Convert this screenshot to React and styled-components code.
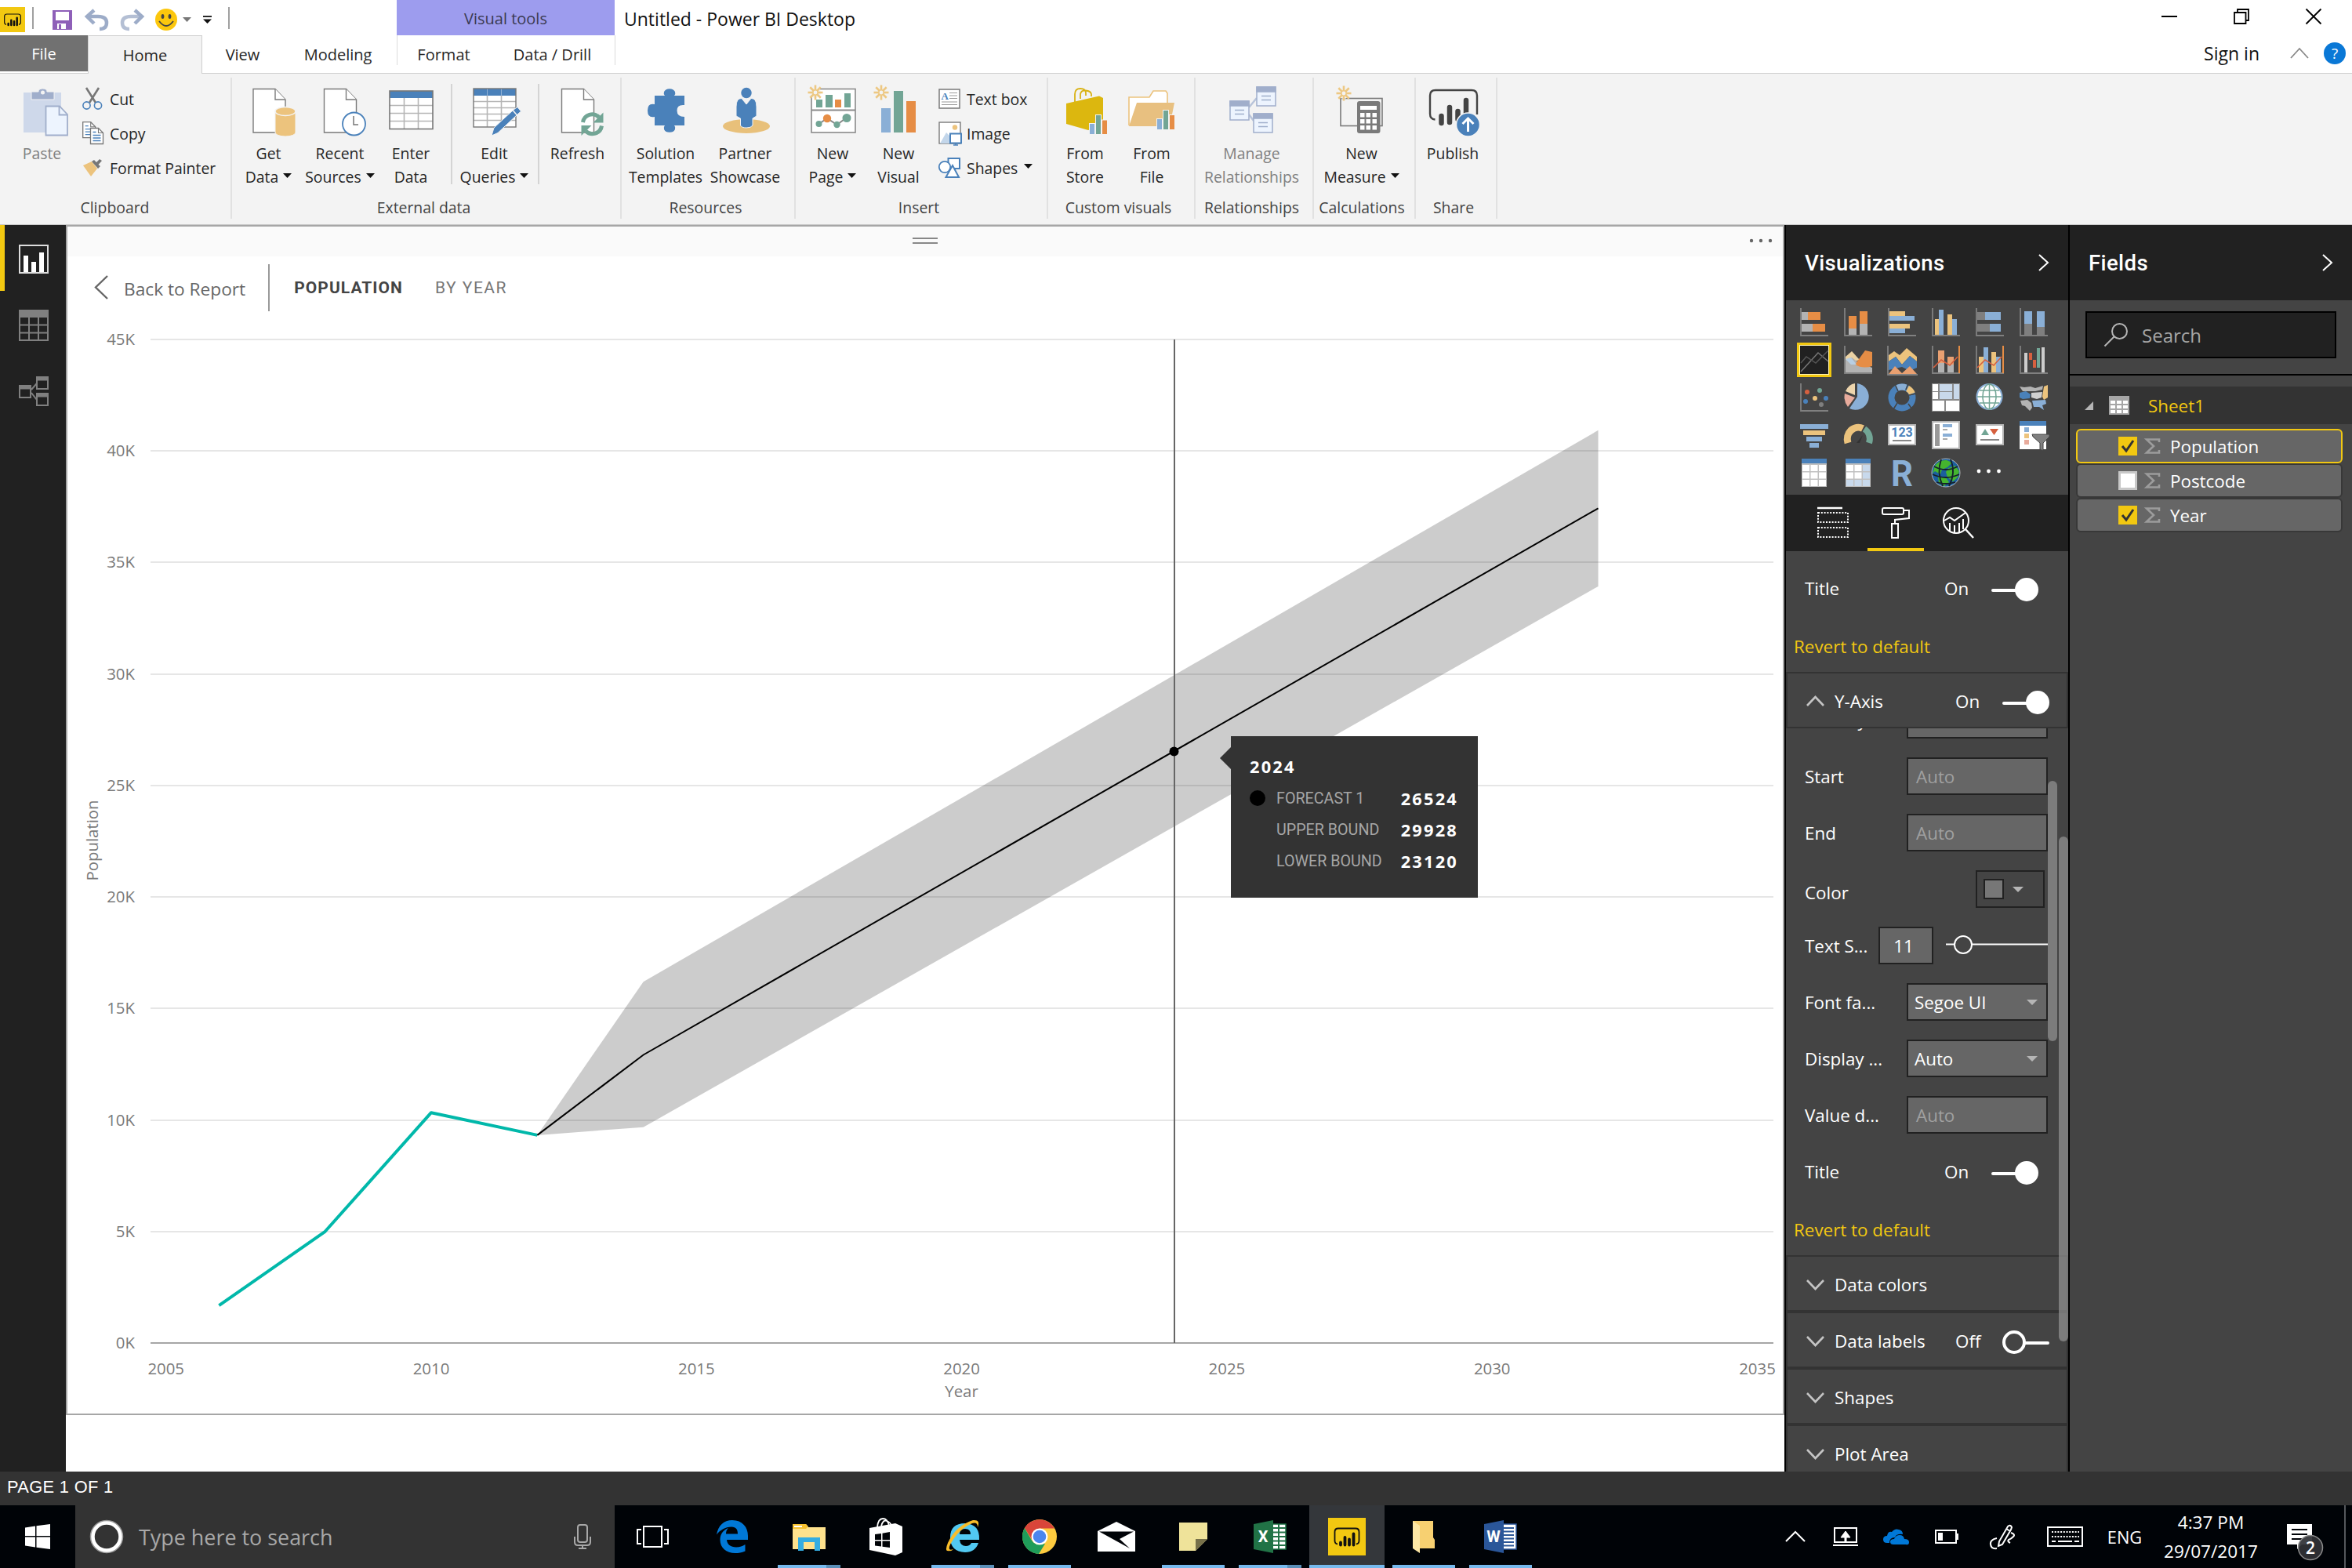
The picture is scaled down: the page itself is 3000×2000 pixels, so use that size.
import React from 'react';
import styled, { createGlobalStyle } from 'styled-components';

const ui = "'Open Sans', 'Noto Sans', sans-serif";
const din = "Roboto, 'Liberation Sans', sans-serif";
const yellow = '#f2c811';
const blue = '#4a81ba';
const sky = '#8aafd6';
const teal = '#72a595';
const orange = '#e68d45';
const gold = '#ecc37d';
const red = '#d6603f';

const Global = createGlobalStyle`
  html, body { margin: 0; padding: 0; background: #fff; }
  *, *::before, *::after { box-sizing: border-box; }
  svg { display: block; flex: none; overflow: visible; }
`;

const Screen = styled.div`
  width: 3000px;
  height: 2000px;
  display: flex;
  flex-direction: column;
  overflow: hidden;
  font-family: ${ui};
  color: #262626;
  white-space: nowrap;
`;

/* ---------- title bar ---------- */
const TitleBar = styled.header`
  height: 45px;
  display: flex;
  background: #fff;
`;
const QuickAccess = styled.div`
  width: 506px;
  display: flex;
  align-items: center;
  padding-top: 5px;
`;
const Spaced = styled.span`
  display: block;
  flex: none;
  margin-left: ${(p) => p.$ml || 0}px;
`;
const QuickRule = styled.i`
  width: 2px;
  height: 28px;
  margin: 0 0 4px ${(p) => p.$ml}px;
  background: #a0a0a0;
`;
const VisualTools = styled.div`
  width: 278px;
  display: flex;
  align-items: center;
  justify-content: center;
  background: #9d9cee;
  color: #3a3a52;
  font-size: 20px;
  padding-top: 1px;
`;
const WindowTitle = styled.h1`
  margin: 0 0 0 12px;
  font-size: 23px;
  font-weight: 400;
  line-height: 48px;
  color: #111;
`;
const WindowButtons = styled.div`
  margin-left: auto;
  display: flex;
  padding-right: 3px;
`;
const WindowButton = styled.div`
  width: 92px;
  height: 42px;
  display: flex;
  align-items: center;
  justify-content: center;
`;

/* ---------- tabs ---------- */
const TabRow = styled.nav`
  height: 49px;
  flex: none;
  display: flex;
  border-bottom: 1px solid #cfcfcf;
  font-size: 20px;
`;
const Tab = styled.div`
  width: ${(p) => p.$w}px;
  height: 48px;
  display: flex;
  align-items: center;
  justify-content: center;
`;
const FileTab = styled(Tab)`
  height: 46px;
  background: #717171;
  color: #fff;
`;
const HomeTab = styled(Tab)`
  height: 49px;
  background: #f3f3f3;
  border: 1px solid #cfcfcf;
  border-bottom: 0;
`;
const ContextTabs = styled.div`
  display: flex;
  width: 279px;
  height: 38px;
  margin-left: 5px;
  border: solid #dcdcdc;
  border-width: 0 1px;
`;
const Account = styled.div`
  margin-left: auto;
  display: flex;
  align-items: center;
  height: 46px;
  padding-right: 8px;
  font-size: 23px;
  color: #111;
`;
const Help = styled.span`
  width: 28px;
  height: 28px;
  margin-left: 19px;
  border-radius: 50%;
  background: #0a78d6;
  color: #fff;
  font-size: 19px;
  line-height: 28px;
  text-align: center;
`;

/* ---------- ribbon ---------- */
const Ribbon = styled.section`
  height: 193px;
  flex: none;
  display: flex;
  padding-top: 5px;
  background: #f3f3f3;
  border-bottom: 1px solid #c9c9c9;
  font-size: 19.4px;
`;
const Group = styled.div`
  width: ${(p) => p.$w}px;
  height: 180px;
  display: flex;
  flex-direction: column;
  border-right: 2px solid #e1e1e1;
`;
const GroupBody = styled.div`
  height: 152px;
  display: flex;
  padding-left: ${(p) => p.$pl || 0}px;
`;
const GroupLabel = styled.div`
  height: 28px;
  line-height: 28px;
  padding-right: ${(p) => (p.$pr === undefined ? 6 : p.$pr)}px;
  text-align: center;
  color: #444;
`;
const BigButton = styled.div`
  width: ${(p) => p.$w}px;
  flex: none;
  display: flex;
  flex-direction: column;
  align-items: center;
  padding-top: 11px;
  margin-left: ${(p) => p.$ml || 0}px;
  color: ${(p) => (p.$off ? '#808080' : '#262626')};
`;
const BigCaption = styled.div`
  margin-top: 7px;
  display: flex;
  flex-direction: column;
  align-items: center;
  line-height: 30px;
`;
const CaptionLine = styled.span`
  display: flex;
  align-items: center;
  gap: 6px;
`;
const DropMark = styled.span`
  margin-bottom: 5px;
`;
const InnerRule = styled.i`
  width: 2px;
  height: 128px;
  margin: 8px 0 0 ${(p) => p.$ml || 0}px;
  background: #d4d4d4;
`;
const SmallStack = styled.div`
  display: flex;
  flex-direction: column;
  padding-top: 5px;
  margin-left: ${(p) => p.$ml}px;
`;
const SmallButton = styled.div`
  height: 44px;
  display: flex;
  align-items: center;
  gap: 8px;
`;

/* ---------- workspace ---------- */
const Workspace = styled.main`
  height: 1590px;
  flex: none;
  display: flex;
`;
const Rail = styled.aside`
  width: 84px;
  display: flex;
  flex-direction: column;
  background: #212121;
`;
const RailItem = styled.div`
  height: 84px;
  display: flex;
  align-items: center;
  padding: 4px 0 0 18px;
  border-left: 6px solid ${(p) => (p.$active ? yellow : '#212121')};
`;
const Canvas = styled.section`
  width: 2192px;
  background: #fff;
`;
const Visual = styled.article`
  position: relative;
  width: 2192px;
  height: 1518px;
  border: 2px solid #a6a6a6;
`;
const VisualHeader = styled.div`
  height: 38px;
  display: flex;
  align-items: center;
  justify-content: space-between;
  padding: 0 13px 2px 1078px;
  background: #fafafa;
`;
const DrillBar = styled.div`
  height: 78px;
  display: flex;
  align-items: center;
  padding-left: 35px;
`;
const BackText = styled.span`
  margin: 4px 0 0 20px;
  font-size: 22.7px;
  color: #666;
`;
const DrillRule = styled.i`
  width: 2px;
  height: 60px;
  margin: 2px 31px 0 29px;
  background: #999;
`;
const Crumb = styled.span`
  font-family: ${din};
  font-size: 21px;
  font-weight: ${(p) => (p.$strong ? 700 : 400)};
  letter-spacing: ${(p) => (p.$strong ? 1.05 : 1.5)}px;
  color: ${(p) => (p.$strong ? '#444' : '#777')};
  margin: 2px 41px 0 0;
`;
const Tooltip = styled.div`
  position: absolute;
  left: 1484px;
  top: 650px;
  width: 315px;
  height: 206px;
  padding: 19px 25px 0 24px;
  background: #333;
  color: #fff;
  &::before {
    content: '';
    position: absolute;
    left: -14px;
    top: 14px;
    border: solid transparent;
    border-width: 14px 14px 14px 0;
    border-right-color: #333;
  }
`;
const TipTitle = styled.div`
  font-size: 21.8px;
  font-weight: 700;
  letter-spacing: 2.2px;
  line-height: 40px;
`;
const TipRow = styled.div`
  display: flex;
  align-items: center;
  height: 40px;
`;
const TipDot = styled.i`
  width: 20px;
  height: 20px;
  border-radius: 50%;
  background: ${(p) => (p.$on ? '#000' : 'transparent')};
`;
const TipLabel = styled.span`
  margin-left: 14px;
  font-family: ${din};
  font-size: 19.7px;
  color: #a6a6a6;
`;
const TipValue = styled.span`
  margin-left: auto;
  font-size: 21.8px;
  font-weight: 700;
  letter-spacing: 2.2px;
`;

/* ---------- panes ---------- */
const Pane = styled.aside`
  width: ${(p) => p.$w}px;
  display: flex;
  flex-direction: column;
  background: #444;
  color: #fff;
  border-left: 2px solid #000;
  overflow: hidden;
  font-size: 22.4px;
`;
const PaneHeader = styled.div`
  height: 96px;
  flex: none;
  display: flex;
  align-items: center;
  justify-content: space-between;
  padding: 0 25px 0 24px;
  background: #212121;
  font-family: ${din};
  font-size: 27.5px;
  font-weight: 500;
  letter-spacing: 0.4px;
`;
const Gallery = styled.div`
  height: 248px;
  flex: none;
  display: grid;
  grid-template-columns: repeat(6, 56px);
  grid-auto-rows: 48px;
  padding: 4px 0 0 8px;
`;
const GalleryCell = styled.div`
  display: flex;
  align-items: center;
  justify-content: center;
`;
const SelectedFrame = styled.div`
  width: 44px;
  height: 44px;
  border: 3px solid ${yellow};
  background: #212121;
  display: flex;
  align-items: center;
  justify-content: center;
  box-shadow: inset 0 0 0 1px #fff3b0;
`;
const PaneTabs = styled.div`
  height: 72px;
  flex: none;
  display: flex;
  padding-left: 24px;
  background: #212121;
`;
const PaneTab = styled.div`
  width: 72px;
  height: 72px;
  margin-right: 8px;
  display: flex;
  justify-content: center;
  padding-top: 16px;
  border-bottom: 4px solid ${(p) => (p.$active ? yellow : 'transparent')};
`;
const FormatArea = styled.div`
  position: relative;
  height: 1174px;
  padding-top: 11px;
  overflow: hidden;
`;
const Row = styled.div`
  height: 72px;
  display: flex;
  align-items: center;
  padding: 0 26px 0 24px;
`;
const ToggleRow = styled(Row)`
  padding-right: 38px;
`;
const RowLabel = styled.span`
  padding-top: ${(p) => p.$drop || 0}px;
`;
const Revert = styled.div`
  height: 71px;
  padding: 5px 0 0 10px;
  display: flex;
  align-items: center;
  color: ${yellow};
`;
const Card = styled.div`
  height: 72px;
  display: flex;
  align-items: center;
  padding: 2px 22px 0 24px;
  border: 2px solid #333;
`;
const CardTitle = styled.span`
  margin-left: 13px;
`;
const State = styled.span`
  margin-left: auto;
  width: 60px;
`;
const Clipped = styled.div`
  height: 25px;
  overflow: hidden;
  display: flex;
  flex-direction: column;
  justify-content: flex-end;
  & > div { flex: none; }
`;
const Field = styled.div`
  width: ${(p) => p.$w || 180}px;
  height: 48px;
  margin-left: auto;
  padding: 0 ${(p) => (p.$select ? 11 : 10)}px 0 ${(p) => (p.$select ? 8 : 10)}px;
  display: flex;
  align-items: center;
  justify-content: space-between;
  background: #666;
  border: 2px solid #212121;
  color: ${(p) => (p.$hint ? '#a0a0a0' : '#fff')};
`;
const Swatch = styled(Field)`
  width: 88px;
  margin-right: 4px;
  padding: 0 25px 0 8px;
  background: #444;
`;
const SwatchColor = styled.i`
  width: 26px;
  height: 26px;
  border: 2px solid #212121;
  background: #777;
`;
const SizeField = styled(Field)`
  width: 70px;
  justify-content: center;
  padding: 0 6px 0 0;
`;
const ScrollThumb = styled.i`
  position: absolute;
  left: ${(p) => p.$x}px;
  top: ${(p) => p.$y}px;
  width: 12px;
  height: ${(p) => p.$h}px;
  border-radius: 6px;
  background: rgba(150, 150, 150, 0.68);
`;
const SearchArea = styled.div`
  height: 96px;
  flex: none;
  padding: 14px 20px 0;
  border-bottom: 2px solid #000;
`;
const SearchBox = styled.div`
  height: 60px;
  display: flex;
  align-items: center;
  gap: 18px;
  padding-left: 22px;
  border: 2px solid #000;
  background: #212121;
  color: #a6a6a6;
  font-size: 24px;
`;
const TableHead = styled.div`
  height: 48px;
  flex: none;
  margin: 14px 0 6px;
  display: flex;
  align-items: center;
  padding-left: 19px;
  background: #333;
  color: ${yellow};
`;
const FieldRow = styled.div`
  height: 44px;
  flex: none;
  margin: 0 12px 0 8px;
  padding-left: 52px;
  display: flex;
  align-items: center;
  background: #666;
  border: 2px solid ${(p) => (p.$active ? yellow : '#383838')};
  border-radius: 6px;
`;
const Check = styled.span`
  width: 24px;
  height: 24px;
  display: flex;
  align-items: center;
  justify-content: center;
  background: ${(p) => (p.$on ? yellow : '#fff')};
  border: ${(p) => (p.$on ? 0 : 3)}px solid #c8c8c8;
`;

/* ---------- bottom bars ---------- */
const StatusBar = styled.footer`
  height: 43px;
  flex: none;
  padding-left: 9px;
  background: #333;
  color: #fff;
  font: 21.8px/40px 'Liberation Sans', Arial, sans-serif;
  letter-spacing: 0.35px;
`;
const Taskbar = styled.footer`
  height: 80px;
  flex: none;
  display: flex;
  background: #000307;
  color: #fff;
`;
const StartButton = styled.div`
  width: 96px;
  display: flex;
  align-items: center;
  justify-content: center;
`;
const Cortana = styled.div`
  width: 688px;
  display: flex;
  align-items: center;
  padding: 0 30px 0 19px;
  background: #333;
  color: #a8a8a8;
  font-size: 26.9px;
`;
const CortanaText = styled.span`
  margin: 1px auto 0 20px;
`;
const TaskSlot = styled.div`
  width: ${(p) => p.$w || 98}px;
  position: relative;
  display: flex;
  align-items: center;
  justify-content: center;
`;
const ActiveSlot = styled(TaskSlot)`
  width: 96px;
  margin: 0 1px;
  background: #34373b;
`;
const Underline = styled.i`
  position: absolute;
  left: ${(p) => (p.$full ? 0 : 9)}px;
  right: ${(p) => (p.$full ? 0 : 9)}px;
  bottom: 0;
  height: 4px;
  background: ${(p) =>
    p.$multi ? 'linear-gradient(90deg, #76b9ed 62px, #5b8fb8 62px)' : '#76b9ed'};
`;
const Tray = styled.div`
  margin-left: auto;
  display: flex;
  padding-right: 8px;
  font-size: 21.8px;
`;
const TraySlot = styled.div`
  width: ${(p) => p.$w}px;
  display: flex;
  align-items: center;
  justify-content: center;
`;
const Clock = styled(TraySlot)`
  flex-direction: column;
  font-size: 22.6px;
  line-height: 37px;
`;
const Desk = styled.i`
  width: 2px;
  margin-left: 14px;
  background: #55585c;
`;

/* ---------- icon helpers ---------- */
const Icon = ({ w = 64, h = w, children, ...r }) => (
  <svg width={w} height={h} viewBox={`0 0 ${w} ${h}`} fill="none" {...r}>
    {children}
  </svg>
);
const R = ({ x, y, x2, y2, c, ...r }) => (
  <rect x={x} y={y} width={x2 - x} height={y2 - y} fill={c} {...r} />
);
const Caret = ({ c = '#111', w = 11, h = 6 }) => (
  <svg width={w} height={h} viewBox="0 0 10 6" preserveAspectRatio="none">
    <path d="M0 0H10L5 6Z" fill={c} />
  </svg>
);
const Chevron = ({ d = 'right', w = 13, h = 22, c = '#fff', sw = 2 }) => {
  const p = {
    right: `M1 1L${w - 1} ${h / 2}L1 ${h - 1}`,
    left: `M${w - 1} 1L1 ${h / 2}L${w - 1} ${h - 1}`,
    up: `M1 ${h - 1}L${w / 2} 1L${w - 1} ${h - 1}`,
    down: `M1 1L${w / 2} ${h - 1}L${w - 1} 1`,
  }[d];
  return (
    <Icon w={w} h={h}>
      <path d={p} stroke={c} strokeWidth={sw} />
    </Icon>
  );
};
const Doc = ({ x = 12 }) => (
  <g stroke="#7a7a7a" strokeWidth="1.4">
    <path d={`M${x} 3.5H${x + 28}L${x + 41} 17V59H${x}Z`} fill="#fff" />
    <path d={`M${x + 28} 3.5V17H${x + 41}`} fill="#fff" />
  </g>
);
const Star = ({ x = 10, y = 8 }) => (
  <g stroke="#edc883" strokeWidth="2.6" transform={`translate(${x} ${y})`}>
    <circle r="7" fill="#f3f3f3" stroke="none" />
    {[0, 45, 90, 135, 180, 225, 270, 315].map((a) => (
      <path key={a} d="M3.5 0H9.5" transform={`rotate(${a})`} />
    ))}
    <circle r="3.2" strokeWidth="1.6" />
  </g>
);
const PbiMark = ({ s = 1 }) => (
  <g transform={`scale(${s})`}>
    <rect width="48" height="48" fill={yellow} />
    <path
      d="M12 33.5Q8.500 33 8.500 29V18Q8.500 13.500 13 13.500H35Q39.500 13.500 39.500 18V29Q39.500 33 36 33.500"
      stroke="#111"
      strokeWidth="1.800"
    />
    <path d="M16 34.500V31.500M21.500 34.500V25M27 34.500V27.500M32.500 34.500V20.500" stroke="#111" strokeWidth="3.800" strokeLinecap="round" />
  </g>
);

const big = {
  paste: (
    <>
      <R x={8} y={8} x2={56} y2={59} c="#ced8ea" />
      <path d="M18 7H27Q27 3 32.500 3T38 7H47V17H18Z" fill="#a0aecb" stroke="#f3f3f3" />
      <circle cx="32.500" cy="8" r="2.500" fill="#f3f3f3" />
      <path d="M36.500 25.500H54L64 36V62.500H36.500Z" fill="#edf4fe" stroke="#a0aecb" strokeWidth="1.800" />
      <path d="M53.500 25.500V36.500H64" stroke="#a0aecb" strokeWidth="1.800" />
    </>
  ),
  getData: (
    <>
      <Doc />
      <path d="M40 32V59A13 5 0 0 0 66 59V32Z" fill={gold} stroke="#f3f3f3" />
      <ellipse cx="53" cy="32" rx="13" ry="5.500" fill={gold} stroke="#f3f3f3" strokeWidth="1.500" />
    </>
  ),
  recent: (
    <>
      <Doc x={11.5} />
      <circle cx="49.500" cy="48" r="14.500" fill="#fff" stroke={blue} strokeWidth="1.800" />
      <path d="M49 38V49H55" stroke="#777" strokeWidth="1.500" />
    </>
  ),
  table: (
    <>
      <R x={5} y={6} x2={60} y2={54.5} c="#fff" />
      <R x={5} y={6} x2={60} y2={15} c={blue} />
      <path d="M23.500 15V54M41.500 15V54M5 24.500H60M5 34.500H60M5 44.500H60" stroke="#b5b5b5" strokeWidth="1.600" />
      <rect x="5" y="6" width="55" height="48.500" stroke="#777" strokeWidth="1.600" />
    </>
  ),
  edit: (
    <>
      <R x={5} y={3} x2={59} y2={52} c="#fff" />
      <R x={5} y={3} x2={59} y2={12} c={blue} />
      <path d="M22.500 12V52M40.500 12V52M5 19.500H59M5 27.500H59M5 35.500H59M5 43.500H59" stroke="#b5b5b5" strokeWidth="1.600" />
      <path d="M22.500 3V12M40.500 3V12" stroke="#8fb0d4" />
      <rect x="5" y="3" width="54" height="49" stroke="#777" strokeWidth="1.400" />
      <path d="M28 63L31 53L56 30L61 26.500L65.500 32L61 36L36 59.500Z" fill={blue} stroke="#f3f3f3" />
      <path d="M55 30.500L60.500 37" stroke="#f3f3f3" strokeWidth="1.500" />
    </>
  ),
  refresh: (
    <>
      <Doc x={11.5} />
      <g stroke={teal} strokeWidth="5">
        <path d="M38.500 46A12 12 0 0 1 59 39.500" />
        <path d="M62.500 50.500A12 12 0 0 1 42 57" />
      </g>
      <path d="M64.500 33.500V46.500H51.500Z" fill={teal} />
      <path d="M36.500 63V50H49.500Z" fill={teal} />
    </>
  ),
  puzzle: (
    <path
      d="M18 12H31Q29 10 30 7A7.500 6 0 0 1 44 7Q45 10 43 12H56V24Q46.500 23 46.500 31T56 39V50H43Q45 52 44 55A7.500 6 0 0 1 30 55Q29 52 31 50H18V39Q9 41 9 31T18 23Z"
      fill={blue}
    />
  ),
  partner: (
    <>
      <ellipse cx="33" cy="51" rx="30" ry="9" fill="#e8c07a" />
      <path d="M20 26Q20 15 27 15.500L33 23L39 15.500Q46 15 46 26V38L41 41V50Q39 53 33 53T25.500 50V41L20 38Z" fill={blue} stroke="#f3f3f3" />
      <circle cx="33" cy="8.500" r="6.700" fill={blue} />
    </>
  ),
  newPage: (
    <>
      <rect x="5" y="3.500" width="56" height="55.500" fill="#fff" stroke="#8a8a8a" strokeWidth="1.600" />
      <path d="M5 30.500H61" stroke="#8a8a8a" strokeWidth="1.800" />
      <R x={11} y={17} x2={19} y2={27} c={teal} />
      <R x={23} y={11} x2={32} y2={27} c={teal} />
      <R x={35} y={17} x2={43} y2={27} c={orange} />
      <R x={47} y={9} x2={55} y2={27} c={teal} />
      <path d="M14.500 48L25 41L37.500 49L50 40" stroke="#888" strokeWidth="2" />
      <circle cx="14.500" cy="48" r="4" fill={teal} />
      <circle cx="25" cy="41" r="5.200" fill={orange} />
      <circle cx="37.500" cy="49" r="4.200" fill={teal} />
      <circle cx="50" cy="40.500" r="5.500" fill={teal} />
      <Star />
    </>
  ),
  newVisual: (
    <>
      <R x={10} y={28} x2={22} y2={59} c={sky} />
      <R x={26} y={6} x2={38} y2={59} c={teal} />
      <R x={42} y={19} x2={54} y2={59} c={orange} />
      <Star />
    </>
  ),
  store: (
    <>
      <path d="M19 20V10Q19 3 26 3T33 9V12M26 16V10Q27 5 33 5.500T40 10V13" stroke="#d9b214" strokeWidth="1.800" />
      <path d="M8 22L50 12.500L55 15V52L36 56L8 48Z" fill="#dcb70f" />
      <g stroke="#f3f3f3">
        <R x={37.5} y={47.5} x2={44.5} y2={61.5} c={sky} />
        <R x={45.5} y={36.5} x2={52.5} y2={61.5} c={teal} />
        <R x={53.5} y={43} x2={60.5} y2={61.5} c={orange} />
      </g>
    </>
  ),
  file: (
    <>
      <path d="M3 50V14H29L34 6H50L52 9V22" fill="#fff" stroke={gold} strokeWidth="1.600" />
      <path d="M3 51L13 21H61L55 51Z" fill="#e8c080" />
      <g stroke="#f3f3f3">
        <R x={38.5} y={41.5} x2={45.5} y2={55.5} c={sky} />
        <R x={46.5} y={30.5} x2={53.5} y2={55.5} c={teal} />
        <R x={54.5} y={36.5} x2={61.5} y2={55.5} c={orange} />
      </g>
    </>
  ),
  relations: (
    <>
      <path d="M28 27L38 15M28 36L34 44" stroke="#b8c4da" strokeWidth="2.500" />
      {[[4, 19], [38, 1], [34, 35]].map(([x, y]) => (
        <g key={y} stroke="#a0aecb" strokeWidth="1.500">
          <R x={x} y={y} x2={x + 24} y2={y + 24} c="#edf4fe" />
          <R x={x} y={y} x2={x + 24} y2={y + 6} c="#a0aecb" />
          <path d={`M${x + 6} ${y + 11.5}H${x + 18}M${x + 6} ${y + 16.5}H${x + 18}`} />
        </g>
      ))}
    </>
  ),
  measure: (
    <>
      <rect x="5" y="15.500" width="53" height="35" stroke="#7a7a7a" strokeWidth="1.600" />
      <Star x={9} y={9} />
      <rect x="26" y="19" width="29.500" height="41" rx="3" fill="#7a7a7a" />
      <R x={30} y={25} x2={51} y2={30} c="#fff" />
      {[34, 42, 50].map((y) => [30, 37.5, 45.5].map((x) => <R key={x + y * 99} x={x} y={y} x2={x + 5.5} y2={y + 5.5} c="#fff" />))}
    </>
  ),
  publish: (
    <>
      <path d="M9.500 42.500Q3 42 3 35V12Q3 5 10 5H56Q63 5 63 12V36" stroke="#444" strokeWidth="2.400" />
      <path d="M17.500 38V47M28 27V46M38.500 32V42M49 18V38" stroke="#444" strokeWidth="6.500" strokeLinecap="round" />
      <circle cx="51.500" cy="49" r="15" fill={blue} stroke="#f3f3f3" strokeWidth="1.500" />
      <path d="M51.500 58V43M44.500 48L51.500 41L58.500 48" stroke="#fff" strokeWidth="3" />
    </>
  ),
};

const small = {
  cut: (
    <Icon w={27} h={28}>
      <path d="M5 0L17 19M21 0L9 19" stroke="#777" strokeWidth="2.600" />
      <circle cx="5.500" cy="22.500" r="4.600" stroke={blue} strokeWidth="1.600" />
      <circle cx="20" cy="22.500" r="4.600" stroke={blue} strokeWidth="1.600" />
    </Icon>
  ),
  copy: (
    <Icon w={27} h={30}>
      {[[0.7, 0.7], [10.5, 8.5]].map(([x, y]) => (
        <g key={x}>
          <path d={`M${x} ${y}H${x + 10}L${x + 16} ${y + 6}V${y + 20}H${x}Z`} fill="#fff" stroke="#777" strokeWidth="1.300" />
          <path d={`M${x + 10} ${y}V${y + 6}H${x + 16}`} stroke="#777" strokeWidth="1.100" />
          <path d={`M${x + 3} ${y + 5}H${x + 7}M${x + 3} ${y + 9}H${x + 13}M${x + 3} ${y + 12.5}H${x + 13}M${x + 3} ${y + 16}H${x + 13}`} stroke={blue} strokeWidth="1.300" />
        </g>
      ))}
    </Icon>
  ),
  painter: (
    <Icon w={27} h={22}>
      <path d="M1 8L12 3L19 12L11 22Z" fill={gold} />
      <path d="M12 3L20 12L23 9L20.500 7L25 2L22 0L18 4L15 1Z" fill="#777" />
    </Icon>
  ),
  textBox: (
    <Icon w={28} h={26}>
      <rect x="1" y="1" width="26" height="24" fill="#fff" stroke="#7a7a7a" strokeWidth="1.500" />
      <path d="M14 5.500H24M14 9H24M14 12.500H24M4 17H24M4 20.500H24" stroke="#999" strokeWidth="1.200" />
      <text x="3.500" y="14" fontFamily="Liberation Serif, serif" fontSize="13" fill={blue} fontWeight="700">A</text>
    </Icon>
  ),
  image: (
    <Icon w={28} h={30}>
      <rect x="1" y="1" width="27" height="27" fill="#fff" stroke="#7a7a7a" strokeWidth="1.400" />
      <circle cx="21" cy="7.500" r="3.200" fill={gold} />
      <path d="M2 28L10 14L14 18V28Z" fill="#c3d6ea" />
      <rect x="15" y="15.500" width="14" height="12" fill="#fff" stroke={blue} strokeWidth="2" />
      <path d="M22 27V30M19 30H25" stroke={blue} strokeWidth="1.500" />
    </Icon>
  ),
  shapes: (
    <Icon w={28} h={26}>
      <rect x="12.500" y="1" width="14.500" height="13" fill="#fff" stroke={blue} strokeWidth="2" />
      <circle cx="8" cy="12" r="7.200" fill="#fff" stroke={blue} strokeWidth="1.800" />
      <path d="M18 10L26 25H9.500Z" fill="#fff" stroke={blue} strokeWidth="2" />
    </Icon>
  ),
};

/* ---------- visual gallery ---------- */
const Axes = () => <path d="M1 0V35H36" stroke="#808080" strokeWidth="1.800" />;
const bars = (list) => list.map(([x, y, x2, y2, c], i) => <R key={i} x={x} y={y} x2={x2} y2={y2} c={c} />);
const lg = '#b3b3b3';
const dg = '#7f7f7f';

const gallery = [
  <><Axes />{bars([[2, 5, 10, 15, lg], [10, 5, 26, 15, orange], [2, 20, 16, 30, lg], [16, 20, 32, 30, orange]])}</>,
  <><Axes />{bars([[6, 10, 16, 26, orange], [6, 26, 16, 34, lg], [20, 4, 30, 20, orange], [20, 20, 30, 34, lg]])}</>,
  <><Axes />{bars([[2, 4, 22, 10, gold], [2, 10, 34, 16, sky], [2, 20, 28, 26, gold], [2, 26, 22, 32, sky]])}</>,
  <><Axes />{bars([[4, 14, 9, 34, gold], [9, 2, 15, 34, sky], [20, 8, 26, 34, gold], [26, 14, 32, 34, sky]])}</>,
  <><Axes />{bars([[2, 5, 12, 15, dg], [12, 5, 32, 15, sky], [2, 20, 18, 30, dg], [18, 20, 32, 30, sky]])}</>,
  <><Axes />{bars([[6, 4, 16, 20, sky], [6, 20, 16, 34, dg], [22, 4, 32, 24, sky], [22, 24, 32, 34, dg]])}</>,
  <><path d="M1 33L23 9L36 20" stroke="#777" strokeWidth="1.500" /><path d="M1 22L8 14L20 22L36 6" stroke="#555" strokeWidth="1.500" /></>,
  <><Axes /><path d="M2 14L10 7L20 18L8 22L2 18Z" fill="#ecd3a4" /><path d="M2 18L10 15L18 21L36 28V34H2Z" fill={lg} /><path d="M14 24L27 6L36 8V26Q24 30 14 24Z" fill={orange} /><path d="M2 17L9 15L16 24L9 24Z" fill="#b8cfe4" /></>,
  <><path d="M0 0V37H38" stroke="#808080" strokeWidth="1.800" /><path d="M1 12L8 7L15 12L24 3L37 14V20L28 13L18 24L10 14L1 20Z" fill={gold} /><path d="M1 20L10 14L18 24L28 13L37 20V28L28 32L18 27L1 31Z" fill={blue} /><path d="M1 36L9 26L18 35L28 26L37 36Z" fill="#e9a071" /></>,
  <><Axes />{bars([[8, 6, 16, 22, '#e9a071'], [8, 22, 16, 34, lg], [20, 14, 28, 24, '#e9a071'], [20, 24, 28, 34, lg]])}<path d="M2 28L12 18L23 25L33 14" stroke={red} strokeWidth="1.600" /><path d="M35 0V35" stroke={orange} strokeWidth="2" /></>,
  <><Axes />{bars([[4, 14, 10, 34, gold], [10, 2, 16, 34, sky], [20, 8, 26, 34, gold], [26, 14, 32, 34, sky]])}<path d="M2 28L12 18L23 25L33 14" stroke={red} strokeWidth="1.600" /><path d="M35 0V35" stroke={orange} strokeWidth="2" /></>,
  <><Axes />{bars([[6, 9, 10, 34, '#ccc'], [12, 9, 16, 18, red], [17, 18, 21, 28, red], [22, 3, 26, 28, teal], [28, 2, 32, 34, '#ccc']])}</>,
  <><Axes /><g><circle cx="9" cy="11" r="3" fill={red} /><circle cx="25" cy="9" r="3" fill={teal} /><circle cx="7" cy="23" r="3" fill={blue} /><circle cx="19" cy="19" r="3" fill={gold} /><circle cx="33" cy="19" r="3" fill={blue} /><circle cx="27" cy="27" r="3" fill={dg} /></g></>,
  <><path d="M17 0A17 17 0 1 1 7 32L17 17Z" fill={sky} /><path d="M14 0V15L2 10Q6 1 14 0Z" fill="#edd5ad" /><path d="M1 13L14 18L5 30Q-1 22 1 13Z" fill="#e8ab9c" /></>,
  <><circle cx="18" cy="18" r="13.500" stroke={blue} strokeWidth="8" /><path d="M12 6A13.500 13.500 0 0 1 23 5.500" stroke={sky} strokeWidth="8" /><path d="M25 6.500A13.500 13.500 0 0 1 31 13" stroke={gold} strokeWidth="8" /><path d="M9 1L13 10M26 0L23 8M36 13L27 15M26 26L31 33M12 25L7 33" stroke="#444" strokeWidth="1.500" /></>,
  <>{bars([[0, 0, 36, 36, '#8a8a8a'], [1, 1, 8, 10, '#fff'], [1, 11, 8, 20, '#fff'], [10, 1, 26, 10, '#c8d8ea'], [10, 11, 26, 20, '#c8d8ea'], [28, 1, 35, 20, '#c8d8ea'], [1, 22, 16, 35, '#fff'], [18, 22, 35, 35, '#fff']])}</>,
  <><circle cx="17.500" cy="17" r="16" fill="#fff" stroke={sky} strokeWidth="2" /><path d="M2 17H33M17.500 1V33M5 9H30M5 25H30" stroke={teal} strokeWidth="1.500" /><ellipse cx="17.500" cy="17" rx="8.500" ry="16" stroke={teal} strokeWidth="1.500" /></>,
  <><path d="M0 4L6 5L14 4L20 6L30 3L29 8L20 10H4Z" fill={lg} /><path d="M0 12L8 10L14 14L13 19L4 20L0 18Z" fill={blue} /><path d="M15 12L29 11L28 18L22 20L15 18Z" fill="#d0d0d0" /><path d="M31 4L36 2V18L31 21L29 17Z" fill={gold} /><path d="M1 22L10 21L15 25L16 31L13 35L7 29L3 28Z" fill={lg} /><path d="M16 22L33 21L34 26L29 28L31 34L25 30L18 30Z" fill={sky} /></>,
  <>{bars([[0, 4, 36, 10, sky], [4, 12, 32, 18, gold], [8, 20, 28, 26, sky], [12, 28, 24, 34, sky]])}</>,
  <><path d="M5 28A14 15 0 0 1 24 9.500" stroke={gold} strokeWidth="9" /><path d="M26 10A14 15 0 0 1 32 28" stroke={teal} strokeWidth="8" /><path d="M16 28L24 18L20 28Z" fill="#333" /></>,
  <><rect x="1" y="5" width="34" height="25" fill="#fff" stroke="#b5b5b5" strokeWidth="2" /><text x="18" y="19.500" fontSize="16" fontFamily={din} fontWeight="700" textAnchor="middle" fill={blue}>123</text><path d="M6 25H30" stroke="#888" strokeWidth="2" /></>,
  <><rect x="1" y="1" width="34" height="34" fill="#fff" stroke="#b5b5b5" strokeWidth="2" />{bars([[4, 4, 10, 32, '#999'], [14, 4, 26, 8, sky], [14, 10, 20, 12, '#aaa'], [14, 16, 26, 20, sky], [14, 22, 20, 24, '#aaa']])}</>,
  <><rect x="1" y="5" width="34" height="25" fill="#fff" stroke="#b5b5b5" strokeWidth="2" /><path d="M7 18L12 10L17 18Z" fill={teal} /><path d="M18 10H29L23.500 18Z" fill={red} /><path d="M6 24H30" stroke="#888" strokeWidth="2" /></>,
  <>{bars([[0, 0, 34, 6, blue], [0, 6, 34, 36, '#fff'], [6, 8, 12, 14, sky], [6, 16, 12, 22, gold], [6, 24, 12, 30, '#e8ab9c']])}<path d="M16 17H38V20L30 28V38L26 36V28L17 20Z" fill={dg} stroke="#444" /></>,
  <>{bars([[2, 0, 34, 36, '#c0c0c0'], [2, 0, 34, 6, blue]])}{[8, 17.5, 27].map((y) => [3, 13.5, 24].map((x) => <R key={x + 50 * y} x={x} y={y} x2={x + 9} y2={y + 8} c="#fff" />))}</>,
  <>{bars([[2, 0, 34, 36, '#c0c0c0'], [2, 0, 34, 6, blue]])}{[8, 17.5, 27].map((y) => [3, 13.5, 24].map((x) => <R key={x + 50 * y} x={x} y={y} x2={x + 9} y2={y + 8} c={x === 24 || y === 27 ? '#c8d9ec' : '#fff'} />))}</>,
  <text x="18" y="35" fontSize="47" textAnchor="middle" fontFamily={din} fontWeight="700" fill={sky} textLength="28" lengthAdjust="spacingAndGlyphs">R</text>,
  <><circle cx="18" cy="18" r="18" fill="#1b5f9e" stroke="#cfcfcf" strokeWidth="0.800" /><path d="M4 9Q10 1 19 2L26 5L20 11L13 14L11 20L4 16L1 19ZM21 12L30 9L35 16L33 24L27 29L20 24L18 17ZM8 23L18 24L22 30L16 35L9 31Z" fill="#45b52f" /><path d="M3 10Q18 18 33 10M1 20Q18 28 35 20M6 30Q18 34 30 30M12 1Q6 18 14 35M24 1Q31 18 22 35" stroke="#14202a" strokeWidth="1.800" /></>,
  <><circle cx="4" cy="16" r="2.400" fill="#fff" /><circle cx="16.500" cy="16" r="2.400" fill="#fff" /><circle cx="29.500" cy="16" r="2.400" fill="#fff" /></>,
];

/* ---------- chart ---------- */
const X = (year) => 211.7 + 67.66 * (year - 2005);
const Y = (v) => 1713 - 28.444 * v;
const actual = [[2006, 1.68], [2008, 5], [2010, 10.33], [2012, 9.32]];
const forecast = [[2012, 9.32], [2014, 12.92], [2032, 37.43]];
const upper = [[2012, 9.32], [2014, 16.2], [2032, 40.93]];
const lower = [[2032, 33.93], [2014, 9.68]];
const pts = (a) => a.map(([x, y]) => `${X(x)},${Y(y)}`).join(' ');

const Chart = () => (
  <svg width="2188" height="1398" viewBox="86 405 2188 1398" fontFamily={ui} fontSize="20.4" fill="#7a7a7a">
    {[45, 40, 35, 30, 25, 20, 15, 10, 5, 0].map((v) => (
      <g key={v}>
        <path d={`M192 ${Math.round(Y(v))}H2262`} stroke={v ? '#e6e6e6' : '#a6a6a6'} strokeWidth="2" />
        <text x="172" y={Y(v) + 7} textAnchor="end">{v}K</text>
      </g>
    ))}
    {[2005, 2010, 2015, 2020, 2025, 2030, 2035].map((y) => (
      <text key={y} x={X(y)} y="1752.500" textAnchor="middle">{y}</text>
    ))}
    <text x="1226.500" y="1782" textAnchor="middle">Year</text>
    <text transform="translate(125 1072) rotate(-90)" textAnchor="middle">Population</text>
    <polygon points={pts([...upper, ...lower])} fill="#000" opacity="0.2" />
    <polyline points={pts(actual)} fill="none" stroke="#01b8aa" strokeWidth="4" strokeLinejoin="round" />
    <polyline points={pts(forecast)} fill="none" stroke="#000" strokeWidth="2" />
    <path d="M1498 433V1713" stroke="#666" strokeWidth="2" />
    <circle cx="1497.500" cy="958.500" r="6" fill="#000" />
  </svg>
);

/* ---------- composed parts ---------- */
const Big = ({ icon, w, ml, off, lines, caret }) => (
  <BigButton $w={w} $ml={ml} $off={off}>
    <Icon>{big[icon]}</Icon>
    <BigCaption>
      {lines.map((l, i) => (
        <CaptionLine key={l}>
          {l}
          {caret && i === lines.length - 1 && <DropMark><Caret /></DropMark>}
        </CaptionLine>
      ))}
    </BigCaption>
  </BigButton>
);
const Small = ({ icon, text, caret }) => (
  <SmallButton>
    {small[icon]}
    {text}
    {caret && <DropMark><Caret /></DropMark>}
  </SmallButton>
);
const ToggleSvg = styled.svg`
  margin-top: 4px;
`;
const Toggle = ({ on }) => (
  <ToggleSvg width="60" height="30" viewBox="0 0 60 30">
    <path d={on ? 'M2 16H32' : 'M28 16H58'} stroke="#fff" strokeWidth="4" strokeLinecap="round" />
    {on ? <circle cx="45" cy="15" r="15" fill="#fff" /> : <circle cx="15" cy="15" r="13" fill="#444" stroke="#fff" strokeWidth="4" />}
  </ToggleSvg>
);
const TitleToggle = () => (
  <ToggleRow>
    <RowLabel>Title</RowLabel>
    <State>On</State>
    <Toggle on />
  </ToggleRow>
);
const Section = ({ title, open, state }) => (
  <Card>
    <Chevron d={open ? 'up' : 'down'} w={23} h={13} c="#c4c4c4" sw={2.6} />
    <CardTitle>{title}</CardTitle>
    {state && <State>{state}</State>}
    {state && <Toggle on={state === 'On'} />}
  </Card>
);
const InputRow = ({ label, value, select }) => (
  <Row>
    <RowLabel>{label}</RowLabel>
    <Field $hint={!select} $select={select}>
      {value}
      {select && <Caret c="#b5b5b5" w={14} h={7} />}
    </Field>
  </Row>
);
const FieldItem = ({ name, on, active }) => (
  <FieldRow $active={active}>
    <Check $on={on}>
      {on && (
        <Icon w={18} h={18}>
          <path d="M2 9L7 15L16 2" stroke="#333" strokeWidth="3" />
        </Icon>
      )}
    </Check>
    <Spaced $ml={10}>
      <Icon w={20} h={20}>
        <path d="M18 5V1.500H2L11 10L2 18.500H18V15" stroke="#9c9c9c" strokeWidth="2.600" />
      </Icon>
    </Spaced>
    <Spaced $ml={12}>{name}</Spaced>
  </FieldRow>
);
const Task = ({ w, line, multi, children }) => (
  <TaskSlot $w={w}>
    {children}
    {line && <Underline $multi={multi} />}
  </TaskSlot>
);
const Office = ({ c, dark, letter, children }) => (
  <Icon w={42} h={42}>
    <R x={23} y={5} x2={41} y2={37} c="#fff" stroke={c} strokeWidth="1.500" />
    {children}
    <path d="M0 5L25 0V42L0 37Z" fill={dark} />
    <text x="12" y="28" fontSize="20" fontFamily={din} fontWeight="700" textAnchor="middle" fill="#fff">{letter}</text>
  </Icon>
);
const NoticeSvg = styled.svg`
  margin: 14px 0 0 10px;
`;

export default function App() {
  return (
    <Screen>
      <Global />
      <TitleBar>
        <QuickAccess>
          <Icon w={32}><PbiMark s={32 / 48} /></Icon>
          <QuickRule $ml={9} />
          <Spaced $ml={24}>
            <Icon w={25} h={25}>
              <path d="M0 0H25V25H0Z" fill="#8e5fb8" />
              <R x={4} y={2} x2={21} y2={13} c="#fff" />
              <R x={6} y={17} x2={17} y2={24} c="#fff" />
              <R x={8} y={18} x2={11} y2={24} c="#8e5fb8" />
            </Icon>
          </Spaced>
          <Spaced $ml={17}>
            <Icon w={29} h={27}>
              <path d="M2 9H16Q27 9 27 17T18 25" stroke="#9dacc8" strokeWidth="4.500" />
              <path d="M11 1L2 9L11 18" stroke="#9dacc8" strokeWidth="4.500" />
            </Icon>
          </Spaced>
          <Spaced $ml={16}>
            <Icon w={29} h={27}>
              <path d="M27 9H13Q2 9 2 17T11 25" stroke="#b4bfd4" strokeWidth="4.500" />
              <path d="M18 1L27 9L18 18" stroke="#9dacc8" strokeWidth="4.500" />
            </Icon>
          </Spaced>
          <Spaced $ml={15}>
            <Icon w={28}>
              <circle cx="14" cy="14" r="14" fill="#fcc70d" />
              <ellipse cx="9.500" cy="10" rx="1.900" ry="3" fill="#444" />
              <ellipse cx="18.500" cy="10" rx="1.900" ry="3" fill="#444" />
              <path d="M5 16Q14 28 23 16" stroke="#444" strokeWidth="1.800" />
            </Icon>
          </Spaced>
          <Spaced $ml={7}><Caret c="#777" /></Spaced>
          <Spaced $ml={15}>
            <Icon w={11} h={10}><path d="M0 1H11" stroke="#111" strokeWidth="1.800" /><path d="M0 4.500H11L5.500 10Z" fill="#111" /></Icon>
          </Spaced>
          <QuickRule $ml={21} />
        </QuickAccess>
        <VisualTools>Visual tools</VisualTools>
        <WindowTitle>Untitled - Power BI Desktop</WindowTitle>
        <WindowButtons>
          <WindowButton><Icon w={20} h={20}><path d="M0 10H20" stroke="#000" strokeWidth="2" /></Icon></WindowButton>
          <WindowButton><Icon w={20} h={20}><path d="M1 5H15.500V19H1ZM5 5V1H19V15H15.500" stroke="#000" strokeWidth="1.800" /></Icon></WindowButton>
          <WindowButton><Icon w={20} h={20}><path d="M.5 .5L19.500 19.500M19.500 .5L.5 19.500" stroke="#000" strokeWidth="1.800" /></Icon></WindowButton>
        </WindowButtons>
      </TitleBar>

      <TabRow>
        <FileTab $w={112}>File</FileTab>
        <HomeTab $w={146}>Home</HomeTab>
        <Tab $w={103}>View</Tab>
        <Tab $w={140}>Modeling</Tab>
        <ContextTabs>
          <Tab $w={118}>Format</Tab>
          <Tab $w={159}>Data / Drill</Tab>
        </ContextTabs>
        <Account>
          Sign in
          <Spaced $ml={39}><Chevron d="up" w={24} h={14} c="#888" sw={1.8} /></Spaced>
          <Help>?</Help>
        </Account>
      </TabRow>

      <Ribbon>
        <Group $w={296}>
          <GroupBody>
            <Big icon="paste" w={107} off lines={['Paste']} />
            <SmallStack $ml={-2}>
              <Small icon="cut" text="Cut" />
              <Small icon="copy" text="Copy" />
              <Small icon="painter" text="Format Painter" />
            </SmallStack>
          </GroupBody>
          <GroupLabel $pr={1}>Clipboard</GroupLabel>
        </Group>
        <Group $w={497}>
          <GroupBody $pl={4}>
            <Big icon="getData" w={85} lines={['Get', 'Data']} caret />
            <Big icon="recent" w={97} lines={['Recent', 'Sources']} caret />
            <Big icon="table" w={84} lines={['Enter', 'Data']} />
            <InnerRule $ml={9} />
            <Big icon="edit" w={107} lines={['Edit', 'Queries']} caret />
            <InnerRule $ml={2} />
            <Big icon="refresh" w={97} lines={['Refresh']} />
          </GroupBody>
          <GroupLabel>External data</GroupLabel>
        </Group>
        <Group $w={222}>
          <GroupBody $pl={6}>
            <Big icon="puzzle" w={100} lines={['Solution', 'Templates']} />
            <Big icon="partner" w={101} ml={1} lines={['Partner', 'Showcase']} />
          </GroupBody>
          <GroupLabel>Resources</GroupLabel>
        </Group>
        <Group $w={322}>
          <GroupBody $pl={5}>
            <Big icon="newPage" w={84} lines={['New', 'Page']} caret />
            <Big icon="newVisual" w={80} ml={2} lines={['New', 'Visual']} />
            <SmallStack $ml={11}>
              <Small icon="textBox" text="Text box" />
              <Small icon="image" text="Image" />
              <Small icon="shapes" text="Shapes" caret />
            </SmallStack>
          </GroupBody>
          <GroupLabel>Insert</GroupLabel>
        </Group>
        <Group $w={188}>
          <GroupBody $pl={7}>
            <Big icon="store" w={80} lines={['From', 'Store']} />
            <Big icon="file" w={84} ml={3} lines={['From', 'File']} />
          </GroupBody>
          <GroupLabel $pr={7}>Custom visuals</GroupLabel>
        </Group>
        <Group $w={151}>
          <GroupBody><Big icon="relations" w={143} off lines={['Manage', 'Relationships']} /></GroupBody>
          <GroupLabel>Relationships</GroupLabel>
        </Group>
        <Group $w={130}>
          <GroupBody><Big icon="measure" w={121} lines={['New', 'Measure']} caret /></GroupBody>
          <GroupLabel>Calculations</GroupLabel>
        </Group>
        <Group $w={104}>
          <GroupBody><Big icon="publish" w={94} lines={['Publish']} /></GroupBody>
          <GroupLabel>Share</GroupLabel>
        </Group>
      </Ribbon>

      <Workspace>
        <Rail>
          <RailItem $active>
            <Icon w={38}>
              <rect x="1" y="1" width="36" height="35" stroke="#ddd" strokeWidth="2" />
              <path d="M9 35V14M19 35V22M29 35V10" stroke="#fff" strokeWidth="6" />
            </Icon>
          </RailItem>
          <RailItem>
            <Icon w={38} h={40}>
              <R x={0} y={0} x2={38} y2={10} c="#808080" />
              <path d="M1 0V39H37V0M13 10V39M25 10V39M1 19.500H37M1 29.500H37" stroke="#808080" strokeWidth="2" />
            </Icon>
          </RailItem>
          <RailItem>
            <Icon w={38}>
              <path d="M16 17L23 9M16 21L23 30" stroke="#808080" strokeWidth="2" />
              {[[0, 11], [22, 0], [22, 21]].map(([x, y]) => (
                <g key={y}>
                  <rect x={x + 1} y={y + 1} width="14" height="15" stroke="#808080" strokeWidth="2" />
                  <R x={x} y={y} x2={x + 16} y2={y + 5.5} c="#808080" />
                </g>
              ))}
            </Icon>
          </RailItem>
        </Rail>

        <Canvas>
          <Visual>
            <VisualHeader>
              <Icon w={32} h={8}><path d="M0 1H32M0 7H32" stroke="#888" strokeWidth="2" /></Icon>
              <Icon w={30} h={6}>
                <circle cx="3" cy="3" r="2.200" fill="#666" />
                <circle cx="15" cy="3" r="2.200" fill="#666" />
                <circle cx="27" cy="3" r="2.200" fill="#666" />
              </Icon>
            </VisualHeader>
            <DrillBar>
              <Chevron d="left" w={17} h={31} c="#666" sw={2.4} />
              <BackText>Back to Report</BackText>
              <DrillRule />
              <Crumb $strong>POPULATION</Crumb>
              <Crumb>BY YEAR</Crumb>
            </DrillBar>
            <Chart />
            <Tooltip>
              <TipTitle>2024</TipTitle>
              {[['FORECAST 1', 26524], ['UPPER BOUND', 29928], ['LOWER BOUND', 23120]].map(([l, v], i) => (
                <TipRow key={l}>
                  <TipDot $on={i === 0} />
                  <TipLabel>{l}</TipLabel>
                  <TipValue>{v}</TipValue>
                </TipRow>
              ))}
            </Tooltip>
          </Visual>
        </Canvas>

        <Pane $w={362}>
          <PaneHeader>Visualizations<Chevron /></PaneHeader>
          <Gallery>
            {gallery.map((g, i) => (
              <GalleryCell key={i}>
                {i === 6 ? <SelectedFrame><Icon w={36}>{g}</Icon></SelectedFrame> : <Icon w={36}>{g}</Icon>}
              </GalleryCell>
            ))}
          </Gallery>
          <PaneTabs>
            <PaneTab>
              <Icon w={40}>
                <path d="M0 1H32" stroke="#fff" strokeWidth="2.500" />
                <path d="M1 7H39V19H1ZM1 26H39V38H1Z" stroke="#fff" strokeWidth="2" strokeDasharray="2 1.800" />
              </Icon>
            </PaneTab>
            <PaneTab $active>
              <Icon w={36} h={40}>
                <rect x="1" y="1" width="27" height="8" rx="2" stroke="#fff" strokeWidth="2" />
                <path d="M28 4H35V14L17 16V21M13 21H21V39H13Z" stroke="#fff" strokeWidth="2" />
              </Icon>
            </PaneTab>
            <PaneTab>
              <Icon w={40}>
                <circle cx="17" cy="17" r="16" stroke="#fff" strokeWidth="2" />
                <path d="M29 28L39 39" stroke="#fff" strokeWidth="2.500" />
                <path d="M2 17L9 13L15 17L29 7M9 20V30M15 23V32M21 20V32M26 15V28" stroke="#fff" strokeWidth="2" />
              </Icon>
            </PaneTab>
          </PaneTabs>
          <FormatArea>
            <TitleToggle />
            <Revert>Revert to default</Revert>
            <Section title="Y-Axis" open state="On" />
            <Clipped>
              <Row style={undefined}>
                <RowLabel>Scale ty...</RowLabel>
                <Field />
              </Row>
              <Spacer />
            </Clipped>
            <InputRow label="Start" value="Auto" />
            <InputRow label="End" value="Auto" />
            <Row>
              <RowLabel $drop={8}>Color</RowLabel>
              <Swatch><SwatchColor /><Caret c="#b5b5b5" w={14} h={7} /></Swatch>
            </Row>
            <Row>
              <RowLabel>Text S...</RowLabel>
              <SizeField>11</SizeField>
              <Spaced $ml={16}>
                <Icon w={130} h={26}>
                  <path d="M0 11.500H130" stroke="#fff" strokeWidth="2" />
                  <circle cx="22" cy="12" r="11" fill="#444" stroke="#fff" strokeWidth="2" />
                </Icon>
              </Spaced>
            </Row>
            <InputRow label="Font fa..." value="Segoe UI" select />
            <InputRow label="Display ..." value="Auto" select />
            <InputRow label="Value d..." value="Auto" />
            <TitleToggle />
            <Revert>Revert to default</Revert>
            <Section title="Data colors" />
            <Section title="Data labels" state="Off" />
            <Section title="Shapes" />
            <Section title="Plot Area" />
            <ScrollThumb $x={334} $y={293} $h={332} />
            <ScrollThumb $x={348} $y={364} $h={644} />
          </FormatArea>
        </Pane>

        <Pane $w={362}>
          <PaneHeader>Fields<Chevron /></PaneHeader>
          <SearchArea>
            <SearchBox>
              <Icon w={30}>
                <circle cx="19.500" cy="10.500" r="9.500" stroke="#b5b5b5" strokeWidth="2" />
                <path d="M13 17L.5 29.500" stroke="#b5b5b5" strokeWidth="2" />
              </Icon>
              Search
            </SearchBox>
          </SearchArea>
          <TableHead>
            <Icon w={11} h={11}><path d="M11 0V11H0Z" fill="#b5b5b5" /></Icon>
            <Spaced $ml={20}>
              <Icon w={26} h={24}>
                <R x={0} y={0} x2={26} y2={24} c="#a6a6a6" />
                {[6, 12, 18].map((y) => [2, 10, 18].map((x) => <R key={x + y * 40} x={x} y={y} x2={x + 6} y2={y + 4} c="#fff" />))}
              </Icon>
            </Spaced>
            <Spaced $ml={24}>Sheet1</Spaced>
          </TableHead>
          <FieldItem name="Population" on active />
          <FieldItem name="Postcode" />
          <FieldItem name="Year" on />
        </Pane>
      </Workspace>

      <StatusBar>PAGE 1 OF 1</StatusBar>

      <Taskbar>
        <StartButton>
          <Icon w={32}>
            <path d="M0 4.500L13 2.500V15H0ZM14.500 2.300L32 0V15H14.500ZM0 16.500H13V29.500L0 27.500ZM14.500 16.500H32V32L14.500 29.700Z" fill="#fff" />
          </Icon>
        </StartButton>
        <Cortana>
          <Icon w={42}>
            <circle cx="21" cy="21" r="20" stroke="#999" strokeWidth="2.500" />
            <circle cx="21" cy="21" r="17.500" stroke="#fff" strokeWidth="4.500" />
          </Icon>
          <CortanaText>Type here to search</CortanaText>
          <Icon w={22} h={32}>
            <rect x="5" y="1" width="12" height="22" rx="3" stroke="#a8a8a8" strokeWidth="2" />
            <path d="M1 16V23Q1 27 5 27H17Q21 27 21 23V16M11 27V31M6 31H16" stroke="#a8a8a8" strokeWidth="2" />
          </Icon>
        </Cortana>
        <Task w={101}>
          <Spaced $ml={-5}>
            <Icon w={41} h={28}>
              <path d="M9 1H32V27H9ZM6 5H1V23H6M35 5H40V23H35" stroke="#fff" strokeWidth="2" />
            </Icon>
          </Spaced>
        </Task>
        <Task>
          <Icon w={40} h={42}>
            <path d="M0 18.500C2 7 9 0 20 0C33 0 40 9 40 20V25H13C13.500 31 18 34.500 25 34.500C30 34.500 33 33 36.500 31V39.500C32 41.500 28 42 24 42C12 42 4.500 35 4.500 25C4.500 18 8.500 12.500 15 10C12.500 12.500 12 15 12 17.500H27C27 12 25 8.500 19 8.500C11 8.500 4 13 0 18.500Z" fill="#0078d7" />
          </Icon>
        </Task>
        <Task line multi>
          <Icon w={42} h={36}>
            <path d="M0 2H17L20 6H42V34H0Z" fill="#fee28d" />
            <path d="M0 2H17L20 5L17 8H0Z" fill="#f7c12f" />
            <R x={2} y={4} x2={12} y2={6} c="#fff" />
            <path d="M7 36V19H35V36H28V25H14V36Z" fill="#34ade2" />
          </Icon>
        </Task>
        <Task>
          <Icon w={42} h={48}>
            <path d="M10 12Q11 1 17 1T25 10M15 11Q17 2 22 4T28 10" stroke="#fff" strokeWidth="1.800" />
            <path d="M0 13L33 7L42 11V44L33 48L0 41Z" fill="#fff" />
            <path d="M7 21L15 20V28H7ZM16.500 19.800L26 18V28H16.500ZM7 29.500H15V36.500L7 35.500ZM16.500 29.500H26V38L16.500 36.800Z" fill="#000307" />
          </Icon>
        </Task>
        <Task line multi>
          <Icon w={44} h={42}>
            <path d="M6 22Q6 4 25 4Q44 5 43 25H18Q19 33 26 33Q31 33 33 29H42Q38 41 25 41Q6 40 6 22ZM18 18H32Q32 11 25 11T18 18Z" fill="#52c9f2" />
            <path d="M5 39Q-2 41 3 29Q13 7 35 0Q45 -1 41 9Q41 2 34 4Q17 11 6 31Q2 40 10 37Q7 40 5 39Z" fill="#f8bd2b" />
          </Icon>
        </Task>
        <Task line>
          <Icon w={44} h={44}>
            <circle cx="22" cy="22" r="22" fill="#fdcb3f" />
            <path d="M2.900 11A22 22 0 0 1 41 11.500H22L13 27Z" fill="#d9453a" />
            <path d="M2.900 11L12.500 27.500Q16 32 22 32L29 31L21 44A22 22 0 0 1 2.900 11Z" fill="#1f9d5a" />
            <circle cx="22" cy="22" r="10.500" fill="#fff" />
            <circle cx="22" cy="22" r="8.300" fill="#4a86ee" />
          </Icon>
        </Task>
        <Task>
          <Icon w={48} h={38}>
            <path d="M0 12L24 0L48 12V38H0Z" fill="#fff" />
            <path d="M2 12.500H46L28 22L41 34Z" fill="#000307" />
          </Icon>
        </Task>
        <Task line>
          <Icon w={36} h={36}>
            <path d="M0 0H36V21L21 36H0Z" fill="#efe39a" />
            <path d="M21 21H36L21 36Z" fill="#77714a" />
          </Icon>
        </Task>
        <Task line multi>
          <Office c="#1e7145" dark="#217346" letter="X">
            <path d="M32 5V37M24 10H41M24 15.500H41M24 21H41M24 26.500H41M24 32H41" stroke="#217346" strokeWidth="2" />
          </Office>
        </Task>
        <ActiveSlot>
          <Icon w={48}><PbiMark /></Icon>
          <Underline $full />
        </ActiveSlot>
        <Task line>
          <Icon w={28} h={42}>
            <path d="M0 1H26V22L28 25V36H6Z" fill="#f7d071" />
            <path d="M0 1L9 7V42L0 36Z" fill="#fde7a5" />
          </Icon>
        </Task>
        <Task line>
          <Office c="#2a5699" dark="#2a5699" letter="W">
            <path d="M25 10H38M25 14.500H38M25 19H38M25 23.500H38M25 28H38M25 32.500H38" stroke="#2a5699" strokeWidth="2" />
          </Office>
        </Task>
        <Tray>
          <TraySlot $w={64}><Chevron d="up" w={26} h={14} sw={2} /></TraySlot>
          <TraySlot $w={64}>
            <Icon w={32} h={24}>
              <path d="M2 1H30V19H2ZM0 23H32" stroke="#fff" strokeWidth="2" />
              <path d="M16 5L22 13H17V18H15V13H10Z" fill="#fff" stroke="#fff" />
            </Icon>
          </TraySlot>
          <TraySlot $w={64}>
            <Icon w={33} h={20}>
              <path d="M5 18Q0 18 0 13.500T5 9Q6 3 11 4Q15 -1 20 1Q25 2 25 7Q17 6 15 11Q8 11 8 18Z" fill="#0078d7" />
              <path d="M13 20Q9 20 9 16.500T14 13Q16 8 21 8T27 13Q33 13 33 17T29 20Z" fill="#0078d7" />
            </Icon>
          </TraySlot>
          <TraySlot $w={66}>
            <Icon w={30} h={18}>
              <path d="M1 1H27V17H1ZM27 6H29V12H27" stroke="#fff" strokeWidth="2" />
              <R x={4} y={4} x2={10} y2={14} c="#fff" />
            </Icon>
          </TraySlot>
          <TraySlot $w={76}>
            <Icon w={32} h={32}>
              <path d="M11 28L12 22L23 3Q26 0 28 4L27 7L16 26ZM21 6L26 9" stroke="#fff" strokeWidth="2" />
              <path d="M9 18Q0 20 1 26T9 31M27 11Q33 13 30 16T24 20Q22 22 26 24" stroke="#fff" strokeWidth="2" />
            </Icon>
          </TraySlot>
          <TraySlot $w={84}>
            <Icon w={46} h={26}>
              <rect x="1" y="1" width="44" height="24" stroke="#fff" strokeWidth="2" />
              <path d="M6 7H41M6 13H41" stroke="#fff" strokeWidth="2" strokeDasharray="2 1.700" />
              <path d="M6 19H11M14 19H32M35 19H41" stroke="#fff" strokeWidth="2" />
            </Icon>
          </TraySlot>
          <TraySlot $w={68}>ENG</TraySlot>
          <Clock $w={152}>
            <span>4:37 PM</span>
            <span>29/07/2017</span>
          </Clock>
          <TraySlot $w={80}>
            <NoticeSvg width="48" height="48" viewBox="0 0 48 48">
              <path d="M0 1H32V27H19L13 33V27H0Z" fill="#fff" />
              <path d="M6 8H26M6 14H26M6 20H20" stroke="#000307" strokeWidth="2" />
              <circle cx="30" cy="31" r="15.500" fill="rgba(48,50,54,.93)" stroke="#8c8c8c" strokeWidth="1.500" />
              <text x="30" y="38.500" fontSize="21" fontWeight="600" textAnchor="middle" fill="#fff">2</text>
            </NoticeSvg>
          </TraySlot>
          <Desk />
        </Tray>
      </Taskbar>
    </Screen>
  );
}

const Spacer = styled.div`
  height: 0;
`;
